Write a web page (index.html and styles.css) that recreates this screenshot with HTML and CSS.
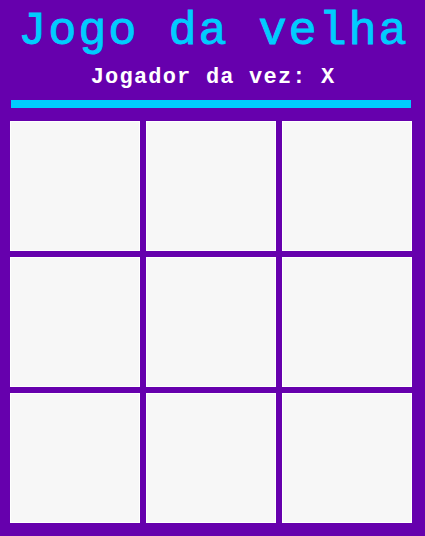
FILE: index.html
```html
<!DOCTYPE html>
<html lang="pt">
<head>
<meta charset="utf-8">
<title>Jogo da velha</title>
<link rel="stylesheet" href="styles.css">
</head>
<body>
<main class="game">
  <h1 class="title">Jogo da velha</h1>
  <p class="turn">Jogador da vez: X</p>
  <div class="bar"></div>
  <div class="board">
    <button class="cell"></button>
    <button class="cell"></button>
    <button class="cell"></button>
    <button class="cell"></button>
    <button class="cell"></button>
    <button class="cell"></button>
    <button class="cell"></button>
    <button class="cell"></button>
    <button class="cell"></button>
  </div>
</main>
</body>
</html>
```
FILE: styles.css
```css
html, body {
  margin: 0;
  padding: 0;
  background: #6600ad;
  height: 100%;
}
.game {
  display: flex;
  flex-direction: column;
  align-items: center;
  font-family: "Liberation Mono", "Courier New", monospace;
  padding: 6px 0 0;
}
.title {
  margin: 0;
  padding-left: 1.8px;
  font-size: 47px;
  font-weight: normal;
  letter-spacing: 1.8px;
  line-height: 52px;
  color: #00ccff;
  -webkit-text-stroke: 0.9px #00ccff;
  white-space: nowrap;
}
.turn {
  margin: 7px 0 0;
  padding-left: 1.2px;
  font-size: 22px;
  font-weight: bold;
  letter-spacing: 1.2px;
  line-height: 26px;
  color: #ffffff;
  white-space: nowrap;
}
.bar {
  margin: 9px 3px 0 0;
  width: 400px;
  height: 8px;
  background: #00ccff;
}
.board {
  margin: 13px 3px 0 0;
  display: grid;
  grid-template-columns: repeat(3, 130px);
  grid-template-rows: repeat(3, 130px);
  gap: 6px;
}
.cell {
  margin: 0;
  padding: 0;
  border: 1px solid #ffffff;
  background: #f7f7f7;
  width: 130px;
  height: 130px;
}
```
